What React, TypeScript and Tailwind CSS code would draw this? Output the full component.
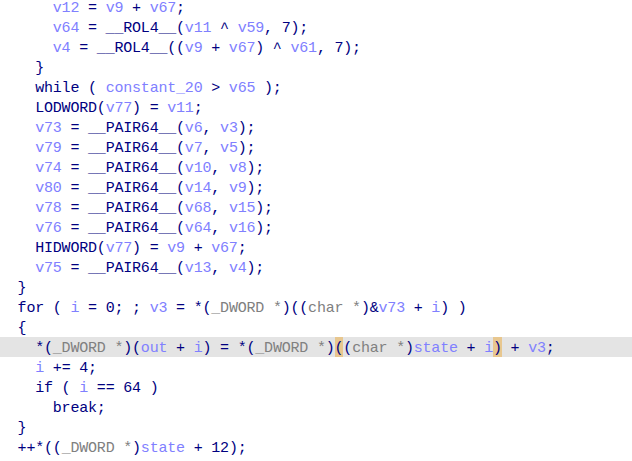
type Tok = [string, 'k' | 'v' | 'c' | 'm'];

const color: Record<Tok[1], string> = {
  k: 'text-[#000080]',
  v: 'text-[#8080ff]',
  c: 'text-[#808080]',
  m: 'text-[#000080] bg-[#e8c78f]',
};

const k = (s: string): Tok => [s, 'k'];
const v = (s: string): Tok => [s, 'v'];
const c = (s: string): Tok => [s, 'c'];
const m = (s: string): Tok => [s, 'm'];

const lines: Tok[][] = [
  [k('      '), v('v12'), k(' = '), v('v9'), k(' + '), v('v67'), k(';')],
  [k('      '), v('v64'), k(' = __ROL4__('), v('v11'), k(' ^ '), v('v59'), k(', 7);')],
  [k('      '), v('v4'), k(' = __ROL4__(('), v('v9'), k(' + '), v('v67'), k(') ^ '), v('v61'), k(', 7);')],
  [k('    }')],
  [k('    while ( '), v('constant_20'), k(' > '), v('v65'), k(' );')],
  [k('    LODWORD('), v('v77'), k(') = '), v('v11'), k(';')],
  [k('    '), v('v73'), k(' = __PAIR64__('), v('v6'), k(', '), v('v3'), k(');')],
  [k('    '), v('v79'), k(' = __PAIR64__('), v('v7'), k(', '), v('v5'), k(');')],
  [k('    '), v('v74'), k(' = __PAIR64__('), v('v10'), k(', '), v('v8'), k(');')],
  [k('    '), v('v80'), k(' = __PAIR64__('), v('v14'), k(', '), v('v9'), k(');')],
  [k('    '), v('v78'), k(' = __PAIR64__('), v('v68'), k(', '), v('v15'), k(');')],
  [k('    '), v('v76'), k(' = __PAIR64__('), v('v64'), k(', '), v('v16'), k(');')],
  [k('    HIDWORD('), v('v77'), k(') = '), v('v9'), k(' + '), v('v67'), k(';')],
  [k('    '), v('v75'), k(' = __PAIR64__('), v('v13'), k(', '), v('v4'), k(');')],
  [k('  }')],
  [k('  for ( '), v('i'), k(' = 0; ; '), v('v3'), k(' = *('), c('_DWORD *'), k(')(('), c('char *'), k(')&'), v('v73'), k(' + '), v('i'), k(') )')],
  [k('  {')],
  [k('    *('), c('_DWORD *'), k(')('), v('out'), k(' + '), v('i'), k(') = *('), c('_DWORD *'), k(')'), m('('), k('('), c('char *'), k(')'), v('state'), k(' + '), v('i'), m(')'), k(' + '), v('v3'), k(';')],
  [k('    '), v('i'), k(' += 4;')],
  [k('    if ( '), v('i'), k(' == 64 )')],
  [k('      break;')],
  [k('  }')],
  [k('  ++*(('), c('_DWORD *'), k(')'), v('state'), k(' + 12);')],
  [k('    '), v('v69'), k(' = sub_1F04('), v('state'), k(');')],
];

export default function App() {
  return (
    <div className="w-[632px] h-[461px] overflow-hidden bg-white">
      <div
        className="-mt-[3px] text-[15px] tracking-[-0.2px]"
        style={{ fontFamily: '"Liberation Mono", "DejaVu Sans Mono", monospace' }}
      >
        {lines.map((toks, i) => (
          <div
            key={i}
            className={`h-[20px] whitespace-pre ${i === 17 ? 'bg-[#e4e4e4]' : ''}`}
          >
            {toks.map(([s, t], j) => (
              <span
                key={j}
                className={`inline-block h-[20px] pt-[2px] leading-[20px] align-top ${color[t]}`}
              >
                {s}
              </span>
            ))}
          </div>
        ))}
      </div>
    </div>
  );
}
